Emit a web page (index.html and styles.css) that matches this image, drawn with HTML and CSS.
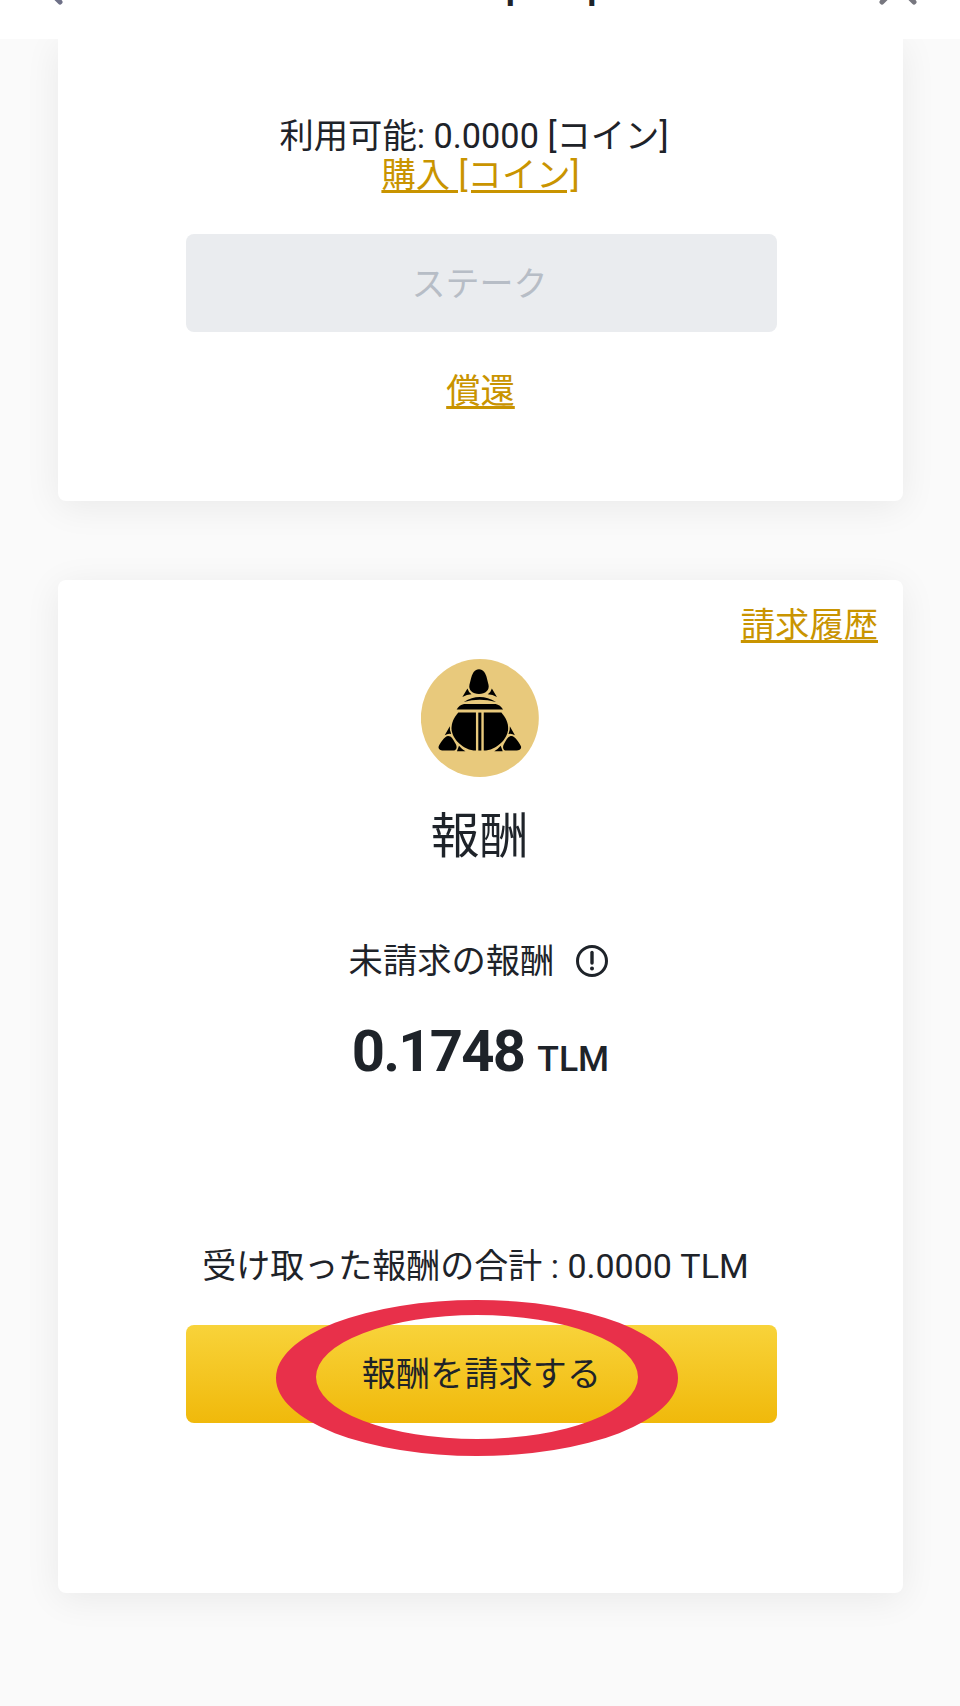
FILE: index.html
```html
<!DOCTYPE html>
<html lang="ja">
<head>
<meta charset="utf-8">
<title>報酬</title>
<link rel="stylesheet" href="styles.css">
</head>
<body>
<header class="bar">
  <div class="bar-row">
    <svg class="bar-icon" width="40" height="50" viewBox="0 0 40 50"><path d="M36 20 L12 44" transform="matrix(-1 0 0 1 48 0)" fill="none" stroke="#6e7087" stroke-width="5" stroke-linecap="round"/></svg>
    <span class="bar-title">www.launchpad.pool.com</span>
    <svg class="bar-icon" width="44" height="50" viewBox="0 0 44 50"><path d="M6 44 L38 12 M38 44 L6 12" fill="none" stroke="#77777f" stroke-width="5" stroke-linecap="round"/></svg>
  </div>
</header>
<main class="page">
  <section class="card card-stake">
    <p class="avail">利用可能: 0.0000 [コイン]</p>
    <a class="link buy" href="#">購入 [コイン]</a>
    <div class="btn btn-off">ステーク</div>
    <a class="link redeem" href="#">償還</a>
  </section>
  <section class="card card-reward">
    <div class="history-row"><a class="link" href="#">請求履歴</a></div>
    <svg class="coin" width="118" height="118" viewBox="70 60 348 348">
      <circle cx="243.500" cy="234" r="174" fill="#e8c97c"/>
      <g fill="#000">
        <path d="M241 90C228 90 222 101 218 115L213 135C209 151 222 163 241 163C260 163 273 151 269 135L264 115C260 101 254 90 241 90Z"/>
        <path d="M207 147L192 172Q205 164 219 164Q210 158 207 147Z"/>
        <path d="M279 147L294 172Q281 164 267 164Q276 158 279 147Z"/>
        <path d="M196 187Q243 157 291 187Q243 174 196 187Z"/>
        <path d="M175 209Q183 196 197 193L290 193Q304 196 312 209Z"/>
        <path d="M232 218L180 218C165 235 160 250 160 265C160 295 195 330 232 330Z"/>
        <path d="M255 218L307 218C322 235 327 250 327 265C327 295 292 330 255 330Z"/>
        <rect x="239" y="218" width="9" height="112"/>
        <path d="M150 287C140 287 125 310 122 318C120 326 128 330 135 330L165 330C175 330 178 320 172 310C165 297 160 287 150 287Z"/>
        <path d="M337 287C347 287 362 310 365 318C367 326 359 330 352 330L322 330C312 330 309 320 315 310C322 297 327 287 337 287Z"/>
        <path d="M155 258L140 285Q150 278 159 281Q154 270 155 258Z"/>
        <path d="M332 258L347 285Q337 278 328 281Q333 270 332 258Z"/>
        <path d="M182 316L176 332L201 332Q190 326 182 316Z"/>
        <path d="M305 316L311 332L286 332Q297 326 305 316Z"/>
      </g>
    </svg>
    <h2 class="reward-title">報酬</h2>
    <div class="unclaimed">
      <span>未請求の報酬</span>
      <svg width="34" height="34" viewBox="0 0 34 34"><circle cx="17" cy="17" r="14.500" fill="none" stroke="#1e2329" stroke-width="3"/><path d="M17 8.500V19" stroke="#1e2329" stroke-width="3.400" stroke-linecap="round"/><circle cx="17" cy="24.500" r="2" fill="#1e2329"/></svg>
    </div>
    <div class="amount"><strong>0.1748</strong><span>TLM</span></div>
    <p class="total">受け取った報酬の合計 : 0.0000 TLM</p>
    <div class="claim-wrap">
      <div class="btn btn-on">報酬を請求する</div>
      <svg class="ring" width="404" height="158" viewBox="0 0 404 158"><path fill="#e8304a" fill-rule="evenodd" d="M1 79A201 78 0 1 0 403 79A201 78 0 1 0 1 79ZM41 78A161 62 0 1 1 363 78A161 62 0 1 1 41 78Z"/></svg>
    </div>
  </section>
</main>
</body>
</html>
```
FILE: styles.css
```css
* { box-sizing: border-box; }
html, body { margin: 0; padding: 0; }
body {
  width: 960px;
  height: 1706px;
  overflow: hidden;
  background: #fafafa;
  color: #1e2329;
  font-family: Roboto, "Noto Sans CJK JP", sans-serif;
  font-size: 34.300px;
  line-height: 39px;
}
.bar {
  position: relative;
  z-index: 2;
  height: 39px;
  overflow: hidden;
  background: #fff;
}
.bar-row {
  display: flex;
  align-items: flex-start;
  height: 50px;
  margin-top: -42px;
  padding: 0 40px 0 24px;
}
.bar-title {
  flex: 1;
  padding-left: 100px;
  text-align: center;
  font-size: 42px;
  line-height: 50px;
  font-weight: 500;
}
.page { padding: 0 57px 0 58px; }
.card {
  background: #fff;
  border-radius: 8px;
  box-shadow: 0 6px 36px rgba(0, 0, 0, .07);
  display: flex;
  flex-direction: column;
  align-items: center;
}
.card-stake { height: 462px; padding-top: 78px; border-radius: 0 0 8px 8px; }
.card-reward { height: 1013px; margin-top: 79px; padding: 26px 26px 0; }
p { margin: 0; }
.avail { margin-right: 13px; }
.link { color: #c99400; text-decoration: underline; text-underline-offset: 3px; }
.btn {
  width: 591px;
  height: 98px;
  margin-left: 2px;
  border-radius: 8px;
  display: flex;
  align-items: center;
  justify-content: center;
  font-size: 34px;
}
.btn-off { margin-top: 39px; background: #eaecef; color: #b7bdc6; padding: 2px 4px 0 0; }
.redeem { margin-top: 40px; }
.history-row { align-self: flex-end; margin-right: -1px; }
.coin { margin: 14px 2px 0 0; display: block; }
.reward-title {
  margin: 25px 2px 0 0;
  font-size: 49px;
  line-height: 70px;
  font-weight: 400;
}
.unclaimed {
  margin: 69px 3px 0 0;
  display: flex;
  align-items: center;
  gap: 21px;
  height: 40px;
}
.amount {
  margin-top: 35px;
  display: flex;
  align-items: baseline;
  gap: 13px;
  height: 70px;
  line-height: 70px;
}
.amount strong { font-size: 58px; font-weight: 700; letter-spacing: -1.800px; }
.amount span { font-size: 35.500px; font-weight: 500; }
.total { margin: 161px 10px 0 0; font-size: 34px; }
.claim-wrap { position: relative; margin-top: 39px; }
.btn-on { background: linear-gradient(#f8d33a, #f0b90b); letter-spacing: .2px; }
.ring { position: absolute; left: 91px; top: -26px; pointer-events: none; }
```
